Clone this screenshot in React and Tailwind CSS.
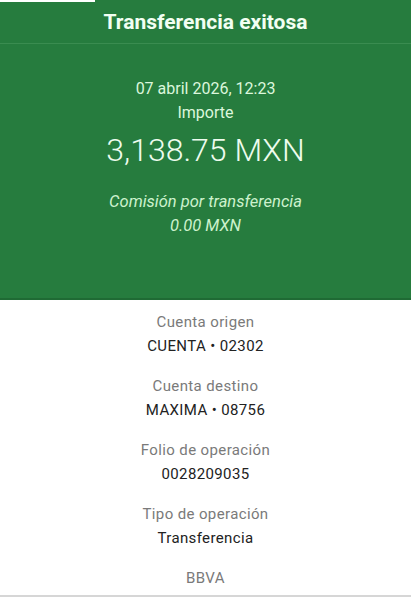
import React from 'react';

const rows = [
  { label: 'Cuenta origen', value: 'CUENTA • 02302' },
  { label: 'Cuenta destino', value: 'MAXIMA • 08756' },
  { label: 'Folio de operación', value: '0028209035' },
  { label: 'Tipo de operación', value: 'Transferencia' },
];

export default function App() {
  return (
    <div className="w-[411px] h-[597px] bg-white flex flex-col overflow-hidden" style={{ fontFamily: 'Roboto, "Noto Sans", sans-serif' }}>
      <div className="bg-[#267c3e] h-[300px] flex flex-col border-b-2 border-[#1f6a34] relative">
        <div className="absolute left-0 top-0 w-[95px] h-[2px] bg-white" />
        <div className="h-[44px] flex items-center justify-center pt-[3px] border-b border-[#3a8c50]">
          <h1 className="text-[21px] font-bold text-[#f2fff2]">Transferencia exitosa</h1>
        </div>
        <div className="flex flex-col items-center pt-[33px] text-[#dcf7dc]">
          <p className="text-[16px] leading-[24px]">07 abril 2026, 12:23</p>
          <p className="text-[16px] leading-[24px]">Importe</p>
          <p className="text-[32px] leading-[42px] mt-[4px] font-light text-[#eefcee]">3,138.75 MXN</p>
          <p className="text-[16.5px] leading-[24px] italic mt-[19px] text-[#cdf2cd]">Comisión por transferencia</p>
          <p className="text-[16.5px] leading-[24px] italic text-[#cdf2cd]">0.00 MXN</p>
        </div>
      </div>
      <div className="flex-1 flex flex-col items-center pt-[10px] border-b-2 border-[#d6d6d6]">
        {rows.map((r) => (
          <div key={r.label} className="flex flex-col items-center mb-[16px]">
            <p className="text-[15px] leading-[24px] text-[#7a7a7a] tracking-wide">{r.label}</p>
            <p className="text-[15px] leading-[24px] text-[#222] tracking-wide">{r.value}</p>
          </div>
        ))}
        <p className="text-[15px] leading-[24px] text-[#7a7a7a] tracking-wide">BBVA</p>
      </div>
    </div>
  );
}
